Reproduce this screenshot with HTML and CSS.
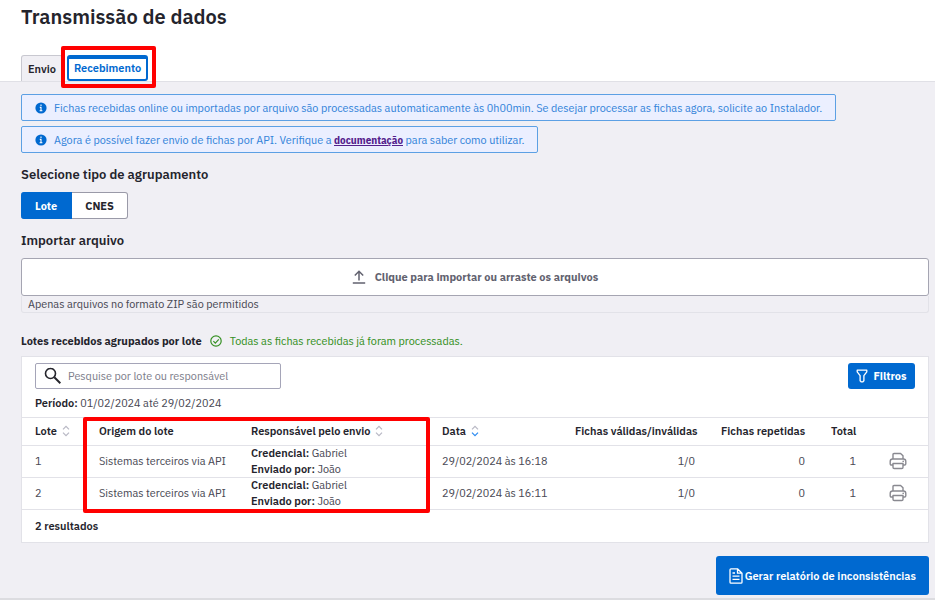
FILE: index.html
```html
<!DOCTYPE html>
<html lang="pt-BR">
<head>
<meta charset="utf-8">
<meta name="viewport" content="width=device-width, initial-scale=1">
<title>Transmissão de dados</title>
<link rel="stylesheet" href="styles.css">
</head>
<body>
<svg class="sprite" aria-hidden="true">
  <symbol id="info" viewBox="0 0 12 12"><circle cx="6" cy="6" r="5.6" fill="#0069d0"/><path d="M6 2.6v1.5M4.8 5.4H6v3M4.6 8.7h2.8" stroke="#fff" stroke-width="1.1" fill="none"/></symbol>
  <symbol id="up" viewBox="0 0 8 12"><path d="M1 4.400 4 1.400l3 3"/></symbol>
  <symbol id="down" viewBox="0 0 8 12"><path d="m1 7.600 3 3 3-3"/></symbol>
  <symbol id="printer" viewBox="0 0 18 18"><g fill="none" stroke="#898990" stroke-width="1.4" stroke-linejoin="round"><path d="M4 7V2.5q0-1 1-1h6.6L14 3.8V7"/><path d="M4 13H2.4Q1.2 13 1.2 11.800V9.500Q1.200 7 3.600 7h10.800q2.400 0 2.400 2.500v2.300q0 1.200-1.200 1.200H14"/><path d="M4 11.500h10v3.800q0 1.200-1.200 1.200H5.200Q4 16.500 4 15.300z"/></g><circle cx="14.200" cy="9.400" r=".8" fill="#898990"/></symbol>
</svg>

<header class="top">
  <h1>Transmissão de dados</h1>
  <nav class="tabs">
    <button class="tab" type="button">Envio</button>
    <span class="tab-wrap"><button class="tab active" type="button">Recebimento</button><span class="mark mark-tab"></span></span>
  </nav>
</header>

<main>
  <p class="notice"><svg class="i12"><use href="#info"/></svg><span>Fichas recebidas online ou importadas por arquivo são processadas automaticamente às 0h00min. Se desejar processar as fichas agora, solicite ao Instalador.</span></p>
  <p class="notice"><svg class="i12"><use href="#info"/></svg><span>Agora é possível fazer envio de fichas por API. Verifique a <a href="#documentacao">documentação</a> para saber como utilizar.</span></p>

  <h2>Selecione tipo de agrupamento</h2>
  <div class="segmented">
    <button class="on" type="button">Lote</button><button type="button">CNES</button>
  </div>

  <h2>Importar arquivo</h2>
  <button class="drop" type="button">
    <svg class="upload" viewBox="0 0 14 14"><path d="M7 10.500V1.500M2.800 5.500 7 1.300l4.200 4.200M.8 13h12.400" fill="none" stroke="#62626f" stroke-width="1.500"/></svg>
    Clique para importar ou arraste os arquivos
  </button>
  <p class="hint">Apenas arquivos no formato ZIP são permitidos</p>

  <div class="list-title">
    <h3>Lotes recebidos agrupados por lote</h3>
    <svg class="i12" viewBox="0 0 12 12" fill="none" stroke="#359023" stroke-width="1.200"><circle cx="6" cy="6" r="5.200"/><path d="m3.400 6.200 1.900 1.900 3.500-3.700"/></svg>
    <span class="ok">Todas as fichas recebidas já foram processadas.</span>
  </div>

  <section class="card">
    <div class="toolbar">
      <label class="search">
        <svg viewBox="0 0 18 18" fill="none" stroke="#25252c"><circle cx="6.500" cy="6.500" r="5" stroke-width="1.600"/><path d="m10.300 10.300 6 5.900" stroke-width="2"/></svg>
        <input type="text" placeholder="Pesquise por lote ou responsável" aria-label="Pesquise por lote ou responsável">
      </label>
      <button class="primary filter" type="button">
        <svg viewBox="0 0 12 14"><path d="M1.200 1.200h9.600v1.600L7.900 6.600v5.200l-1 1H5.100l-1-1V6.600L1.200 2.800z" fill="none" stroke="#fff" stroke-width="1.300" stroke-linejoin="round"/></svg>
        Filtros
      </button>
    </div>
    <p class="period"><b>Período:</b> 01/02/2024 até 29/02/2024</p>
    <div class="table-wrap">
      <table>
        <colgroup><col class="c-lote"><col class="c-origem"><col class="c-resp"><col><col class="c-valid"><col class="c-rep"><col class="c-total"><col class="c-print"></colgroup>
        <thead>
          <tr><th>Lote <svg class="sort"><use href="#up"/><use href="#down"/></svg></th><th>Origem do lote</th><th>Responsável pelo envio <svg class="sort"><use href="#up"/><use href="#down"/></svg></th><th>Data <svg class="sort"><use href="#up"/><use class="desc" href="#down"/></svg></th><th class="num">Fichas válidas/inválidas</th><th class="num">Fichas repetidas</th><th class="num">Total</th><th></th></tr>
        </thead>
        <tbody>
          <tr><td>1</td><td>Sistemas terceiros via API</td><td><b>Credencial:</b> Gabriel<br><b>Enviado por:</b> João</td><td>29/02/2024 às 16:18</td><td class="num">1/0</td><td class="num">0</td><td class="num">1</td><td class="act"><button type="button" aria-label="Imprimir lote 1"><svg><use href="#printer"/></svg></button></td></tr>
          <tr><td>2</td><td>Sistemas terceiros via API</td><td><b>Credencial:</b> Gabriel<br><b>Enviado por:</b> João</td><td>29/02/2024 às 16:11</td><td class="num">1/0</td><td class="num">0</td><td class="num">1</td><td class="act"><button type="button" aria-label="Imprimir lote 2"><svg><use href="#printer"/></svg></button></td></tr>
        </tbody>
      </table>
      <span class="mark mark-table"></span>
    </div>
    <p class="results">2 resultados</p>
  </section>

  <div class="actions">
    <button class="primary report" type="button">
      <svg viewBox="0 0 14 16"><path d="M8.500.8H2Q1 .8 1 1.800v12.400q0 1 1 1h10q1 0 1-1V5.200zM8.500.8v4.400H13M3.500 5h2.500M3.500 8.200h7M3.500 11.400h7" fill="none" stroke="#fff" stroke-width="1.300" stroke-linejoin="round"/></svg>
      Gerar relatório de inconsistências
    </button>
  </div>
</main>
</body>
</html>
```
FILE: styles.css
```css
* { box-sizing: border-box; }
body { margin: 0; min-height: 100vh; background: #f0eff4; color: #24242c; font: 12px/16px "IBM Plex Sans Condensed", Roboto, "Noto Sans", sans-serif; }
h1, h2, h3, p { margin: 0; }
h1, h2, h3, b, th, .results, button { font-family: "IBM Plex Sans", Roboto, "Noto Sans", sans-serif; font-weight: 600; }
button, input { font-size: inherit; line-height: inherit; color: inherit; }
input { font-family: inherit; }
b, th, .results, button { font-size: 11px; }
button { padding: 0; border: 0; background: none; cursor: pointer; }
svg { display: block; flex: none; }
.sprite { position: absolute; width: 0; height: 0; }
.i12 { width: 12px; height: 12px; }

.top { background: #fff; padding: 5px 21px 0; border-bottom: 1px solid #e0e0e6; }
h1 { font-size: 20px; line-height: 24px; }
.tabs { display: flex; gap: 4px; margin-top: 26px; }
.tab { height: 26px; padding: 0 6px; border: 1px solid #c8c8d0; border-bottom: 0; border-radius: 3px 3px 0 0; background: #f0eff4; }
.tab-wrap { position: relative; }
.tab.active { background: #fff; color: #0069d0; border: 2px solid #0069d0; border-top-width: 4px; border-radius: 3px; padding: 0 5px 2px; }
.mark { position: absolute; border: 4px solid #f00; border-radius: 2px; pointer-events: none; }
.mark-tab { inset: -9px -8px -7px -6px; }

main { padding: 12px 6px 3px 21px; border-bottom: 2px solid #dcdce0; }
.notice { display: flex; align-items: center; gap: 7px; width: fit-content; min-height: 27px; margin-bottom: 5px; padding: 0 13px; border: 1px solid #5ca0e4; border-radius: 2px; background: #ebefff; color: #3585da; }
.notice a { color: #53208c; font-size: 11px; font-weight: 700; }
h2 { font-size: 13px; line-height: 20px; }
.notice + h2 { margin-top: 12px; }
.segmented { display: flex; width: fit-content; margin: 7px 0 12px; }
.segmented button { height: 27px; padding: 0 13px; border: 1px solid #9a9aa8; border-left: 0; border-radius: 0 3px 3px 0; background: #fff; font-weight: 700; }
.segmented .on { padding: 0 14px; border-color: #0069d0; border-radius: 3px 0 0 3px; background: #0069d0; color: #fff; }
.drop { display: flex; align-items: center; justify-content: center; gap: 9px; width: 100%; height: 38px; margin-top: 7px; border: 1px solid #a5a5b2; border-radius: 3px; background: #fff; color: #62626f; font-weight: 700; }
.upload { width: 14px; height: 14px; }
.hint { padding: 0 6px; border: 1px solid #e2e2e8; border-top: 0; border-radius: 0 0 3px 3px; color: #4a4a55; }
.list-title { display: flex; align-items: center; gap: 8px; margin: 20px 0 7px; }
h3 { font-size: 11px; line-height: 16px; font-weight: 700; }
.ok { color: #359023; }

.card { border: 1px solid #e2e2e8; background: #fff; }
.toolbar { display: flex; justify-content: space-between; padding: 6px 13px 0 13px; }
.search { display: flex; align-items: center; gap: 6px; width: 246px; height: 26px; padding: 0 8px; border: 1px solid #a5a5b8; border-radius: 2px; }
.search svg { width: 18px; height: 18px; }
.search input { flex: 1; min-width: 0; padding: 0; border: 0; outline: 0; background: none; }
.search input::placeholder { color: #80808c; opacity: 1; }
.primary { display: flex; align-items: center; justify-content: center; border-radius: 3px; background: #0069d0; color: #fff; }
.filter { gap: 5px; width: 67px; height: 26px; font-weight: 700; }
.filter svg { width: 12px; height: 14px; }
.period { padding: 6px 13px; color: #4a4a55; }
b { color: #24242c; }
.table-wrap { position: relative; border-bottom: 1px solid #e2e2e8; }
table { width: 100%; border-collapse: collapse; table-layout: fixed; color: #4a4a55; }
th, td { padding: 0 13px; text-align: left; white-space: nowrap; box-shadow: inset 0 1px #e2e2e8; }
th { height: 28px; color: #24242c; }
td { height: 32px; }
.num { text-align: right; }
.act { padding: 0 20px; }
.act button, .act svg { display: block; width: 18px; height: 18px; }
.sort { display: inline-block; width: 8px; height: 12px; margin-left: 2px; vertical-align: -2px; fill: none; stroke: #b8b8c4; stroke-width: 1.2; }
.desc { stroke: #2c8bf0; }
.c-lote { width: 64px; }
.c-origem { width: 152px; }
.c-resp { width: 191px; }
.c-valid { width: 146px; }
.c-rep { width: 110px; }
.c-total { width: 51px; }
.c-print { width: 59px; }
.mark-table { top: 0; bottom: -4px; left: 61px; width: 347px; }
.results { padding: 8px 13px; font-weight: 600; }
.actions { display: flex; justify-content: flex-end; margin-top: 13px; }
.report { gap: 2px; height: 39px; padding: 0 13px; }
.report svg { width: 14px; height: 16px; }
```
